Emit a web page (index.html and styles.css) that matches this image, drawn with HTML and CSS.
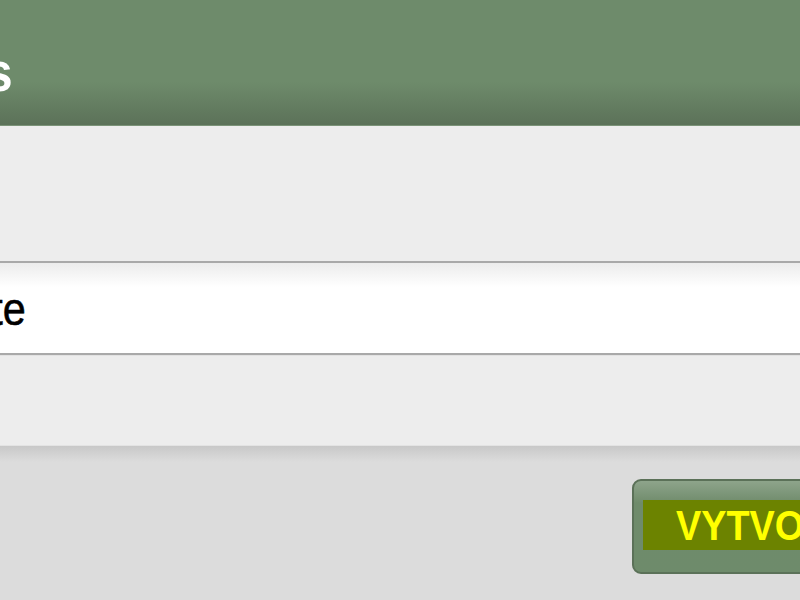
FILE: index.html
```html
<!DOCTYPE html>
<html lang="cs">
<head>
<meta charset="utf-8">
<title>Nový nápis</title>
<link rel="stylesheet" href="styles.css">
</head>
<body>
<header class="header">
  <div class="title-box"><h1 class="title">Nový nápis</h1></div>
</header>
<main class="main">
  <div class="field">
    <div class="field-text-box"><span class="field-text">Zadejte</span></div>
  </div>
</main>
<footer class="footer">
  <button class="btn" type="button"><span class="btn-label"><span class="btn-text">VYTVOŘIT</span></span></button>
</footer>
</body>
</html>
```
FILE: styles.css
```css
html, body {
  margin: 0;
  padding: 0;
  height: 100%;
  overflow: hidden;
}
body {
  background: #dcdcdc;
  font-family: "Liberation Sans", Arial, sans-serif;
}
.header {
  background: linear-gradient(to bottom, #6e8b6b 0px, #6e8b6b 82px, #5c7259 124px);
  border-bottom: 1px solid #7b9378;
  box-sizing: border-box;
  height: 126px;
}
.title-box {
  width: 13px;
  display: flex;
  justify-content: flex-end;
  padding-top: 40px;
}
.title {
  display: inline-block;
  margin: 0;
  white-space: nowrap;
  color: #ffffff;
  font-size: 56px;
  line-height: 64px;
  font-weight: bold;
  transform: scaleX(0.88);
  transform-origin: right center;
}
.main {
  background: #ededed;
  height: 319px;
  padding-top: 135px;
  box-sizing: border-box;
}
.field {
  height: 94px;
  box-sizing: border-box;
  border-top: 2px solid #a9a9a9;
  border-bottom: 2px solid #a9a9a9;
  background: linear-gradient(to bottom, #ececec 0px, #ffffff 24px);
  box-shadow: 0 1px 0 #e2e2e2;
}
.field-text-box {
  width: 26px;
  display: flex;
  justify-content: flex-end;
  padding-top: 19px;
}
.field-text {
  display: inline-block;
  white-space: nowrap;
  color: #000;
  font-size: 47px;
  line-height: 54px;
  -webkit-text-stroke: 0.6px #000;
  transform: scaleX(0.88);
  transform-origin: right center;
}
.footer {
  border-top: 1px solid #e3e3e3;
  background: linear-gradient(to bottom, #c8c8c8 0px, #dcdcdc 16px);
  height: 160px;
  padding-top: 33px;
  padding-left: 632px;
  box-sizing: border-box;
}
.btn {
  display: flex;
  align-items: flex-start;
  width: 300px;
  height: 95px;
  margin: 0;
  padding: 19px 0 0 9px;
  box-sizing: border-box;
  border: 2px solid #5b7158;
  border-radius: 9px;
  background: linear-gradient(to bottom, #8ea48b 0px, #6f8b6b 22px, #6e8b6b 100%);
  font-family: inherit;
  cursor: pointer;
}
.btn-label {
  display: block;
  height: 50px;
  line-height: 52px;
  padding-left: 33px;
  padding-right: 40px;
  background: #6c8300;
  color: #ffff00;
  font-size: 42px;
  font-weight: bold;
  white-space: nowrap;
}
.btn-text {
  display: inline-block;
  transform: scaleX(0.9);
  transform-origin: left center;
}
```
